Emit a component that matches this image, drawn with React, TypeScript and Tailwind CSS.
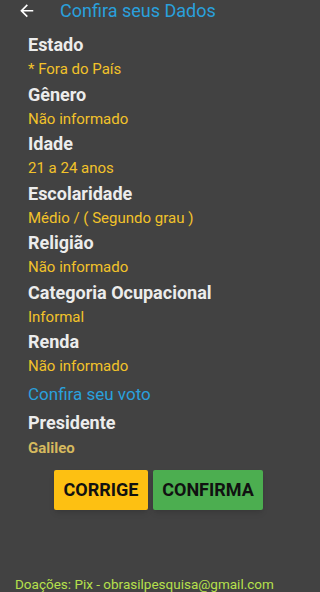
import React from 'react';

const dados = [
  { label: 'Estado', value: '* Fora do País' },
  { label: 'Gênero', value: 'Não informado' },
  { label: 'Idade', value: '21 a 24 anos' },
  { label: 'Escolaridade', value: 'Médio / ( Segundo grau )' },
  { label: 'Religião', value: 'Não informado' },
  { label: 'Categoria Ocupacional', value: 'Informal' },
  { label: 'Renda', value: 'Não informado' },
];

const ConfirmaDados = () => {
  return (
    <div
      className="flex flex-col h-[592px] bg-[#424242] overflow-hidden"
      style={{ fontFamily: 'Roboto, "Liberation Sans", sans-serif' }}
    >
      {/* Header */}
      <div className="flex items-center h-[22px] pl-[17px]">
        <svg viewBox="0 0 24 24" className="w-[19.5px] h-[19.5px] fill-white">
          <path d="M20 11H7.83l5.59-5.59L12 4l-8 8 8 8 1.41-1.41L7.83 13H20v-2z" />
        </svg>
        <span className="ml-[23.5px] text-[18px] leading-[22px] text-[#2aa0dc]">
          Confira seus Dados
        </span>
      </div>

      {/* Dados */}
      <div className="pl-[28px] pt-[11px]">
        {dados.map((item) => (
          <div key={item.label}>
            <div className="text-[18px] leading-[24px] font-bold text-[#ececec]">{item.label}</div>
            <div className="text-[15px] leading-[25.5px] text-[#f2c22a]">{item.value}</div>
          </div>
        ))}

        <div className="text-[17px] leading-[28px] text-[#2aa0dc]">Confira seu voto</div>
        <div className="mt-[3px] text-[18px] leading-[24px] font-bold text-[#ececec]">Presidente</div>
        <div className="text-[15px] leading-[26px] font-bold text-[#d6b95e]">Galileo</div>
      </div>

      {/* Botões */}
      <div className="flex gap-[5px] pl-[54px] mt-[9px]">
        <button className="w-[94px] h-[40px] rounded-[2px] bg-[#fdc012] text-[#111] text-[18px] font-bold shadow-md">
          CORRIGE
        </button>
        <button className="w-[110px] h-[40px] rounded-[2px] bg-[#4cae50] text-[#111] text-[18px] font-bold shadow-md">
          CONFIRMA
        </button>
      </div>

      {/* Rodapé */}
      <div className="mt-auto h-[16px] pl-[15px] text-[13.5px] leading-[16px] text-[#b6e04c]">
        Doações: Pix - obrasilpesquisa@gmail.com
      </div>
    </div>
  );
};

export default function App() {
  return <ConfirmaDados />;
}
